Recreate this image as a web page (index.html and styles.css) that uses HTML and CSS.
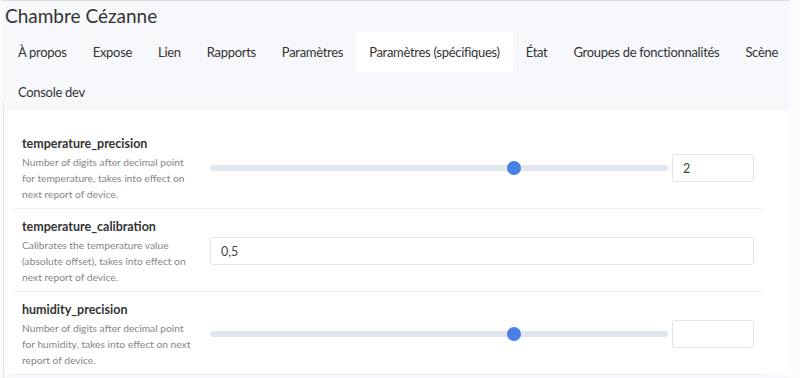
FILE: index.html
```html
<!DOCTYPE html>
<html lang="fr">
<head>
    <meta charset="UTF-8">
    <meta name="viewport" content="width=device-width, initial-scale=1.0">
    <title>Chambre Cézanne</title>
    <link rel="stylesheet" href="styles.css">
</head>
<body>
    <div class="page">
        <h1 class="device-title">Chambre Cézanne</h1>
        <nav class="tabs">
            <a class="tab">À propos</a>
            <a class="tab">Expose</a>
            <a class="tab">Lien</a>
            <a class="tab">Rapports</a>
            <a class="tab">Paramètres</a>
            <a class="tab active">Paramètres (spécifiques)</a>
            <a class="tab">État</a>
            <a class="tab">Groupes de fonctionnalités</a>
            <a class="tab">Scène</a>
            <a class="tab">Console dev</a>
        </nav>
        <div class="card">
            <div class="setting">
                <div class="setting-info">
                    <div class="setting-name">temperature_precision</div>
                    <div class="setting-desc">Number of digits after decimal point for temperature, takes into effect on next report of device.</div>
                </div>
                <div class="setting-control">
                    <div class="range">
                        <div class="range-track"></div>
                        <div class="range-thumb"></div>
                    </div>
                    <input class="num-input" type="text" value="2">
                </div>
            </div>
            <div class="setting">
                <div class="setting-info">
                    <div class="setting-name">temperature_calibration</div>
                    <div class="setting-desc">Calibrates the temperature value (absolute offset), takes into effect on next report of device.</div>
                </div>
                <div class="setting-control">
                    <input class="text-input" type="text" value="0,5">
                </div>
            </div>
            <div class="setting">
                <div class="setting-info">
                    <div class="setting-name">humidity_precision</div>
                    <div class="setting-desc">Number of digits after decimal point for humidity, takes into effect on next report of device.</div>
                </div>
                <div class="setting-control">
                    <div class="range">
                        <div class="range-track"></div>
                        <div class="range-thumb"></div>
                    </div>
                    <input class="num-input" type="text" value="">
                </div>
            </div>
        </div>
    </div>
</body>
</html>
```

FILE: styles.css
```css
html, body {
    margin: 0;
    height: 100%;
    overflow: hidden;
}
body {
    font-family: Lato, "Noto Sans", sans-serif;
    background-color: #fbfbfc;
    color: #333;
}
.page {
    width: 790px;
    height: 100%;
    box-sizing: border-box;
    background-color: #f7f8fb;
    border-top: 1px solid #dcdcdc;
    border-left: 3px solid #fbfbfc;
    position: relative;
}
.page::before {
    content: "";
    position: absolute;
    left: 0;
    top: 100px;
    bottom: 0;
    width: 1px;
    background-color: #e2e4e8;
}
.device-title {
    margin: 0;
    padding: 1px 0 0 2px;
    height: 30px;
    font-size: 19px;
    font-weight: 400;
    line-height: 28px;
    color: #333;
}
.tabs {
    display: flex;
    flex-wrap: wrap;
    padding-left: 2px;
    margin-right: -10px;
    margin-bottom: -2px;
}
.tab {
    height: 40px;
    line-height: 40px;
    padding: 0 13px;
    font-size: 13px;
    letter-spacing: -0.3px;
    color: #333;
    cursor: pointer;
}
.tab.active {
    background-color: #fff;
}
.card {
    margin-left: 2px;
    background-color: #fff;
    padding: 16px 26px 0 7px;
}
.setting {
    display: flex;
    align-items: center;
    padding: 8px 10px 6px 10px;
    border-bottom: 1px solid #eeeff2;
    height: 83px;
    box-sizing: border-box;
}
.setting-info {
    width: 172px;
    flex: none;
    margin-right: 16px;
}
.setting-name {
    font-size: 12.5px;
    font-weight: 700;
    line-height: 20px;
    color: #333;
}
.setting-desc {
    font-size: 10.25px;
    line-height: 16px;
    color: #868686;
}
.setting-control {
    flex: 1;
    display: flex;
    align-items: center;
}
.range {
    flex: 1;
    position: relative;
    height: 14px;
    margin-right: 4px;
}
.range-track {
    position: absolute;
    left: 0;
    right: 0;
    top: 4px;
    height: 6px;
    border-radius: 3px;
    background-color: #e1e6ee;
}
.range-thumb {
    position: absolute;
    left: 297px;
    top: 0;
    width: 14px;
    height: 14px;
    border-radius: 50%;
    background-color: #4a7fe8;
}
.num-input, .text-input {
    font-family: inherit;
    font-size: 12.5px;
    color: #444;
    border: 1px solid #e3e4e8;
    border-radius: 3px;
    padding: 0 10px;
    height: 28px;
    box-sizing: border-box;
    outline: none;
}
.num-input {
    width: 82px;
}
.text-input {
    flex: 1;
}
```
